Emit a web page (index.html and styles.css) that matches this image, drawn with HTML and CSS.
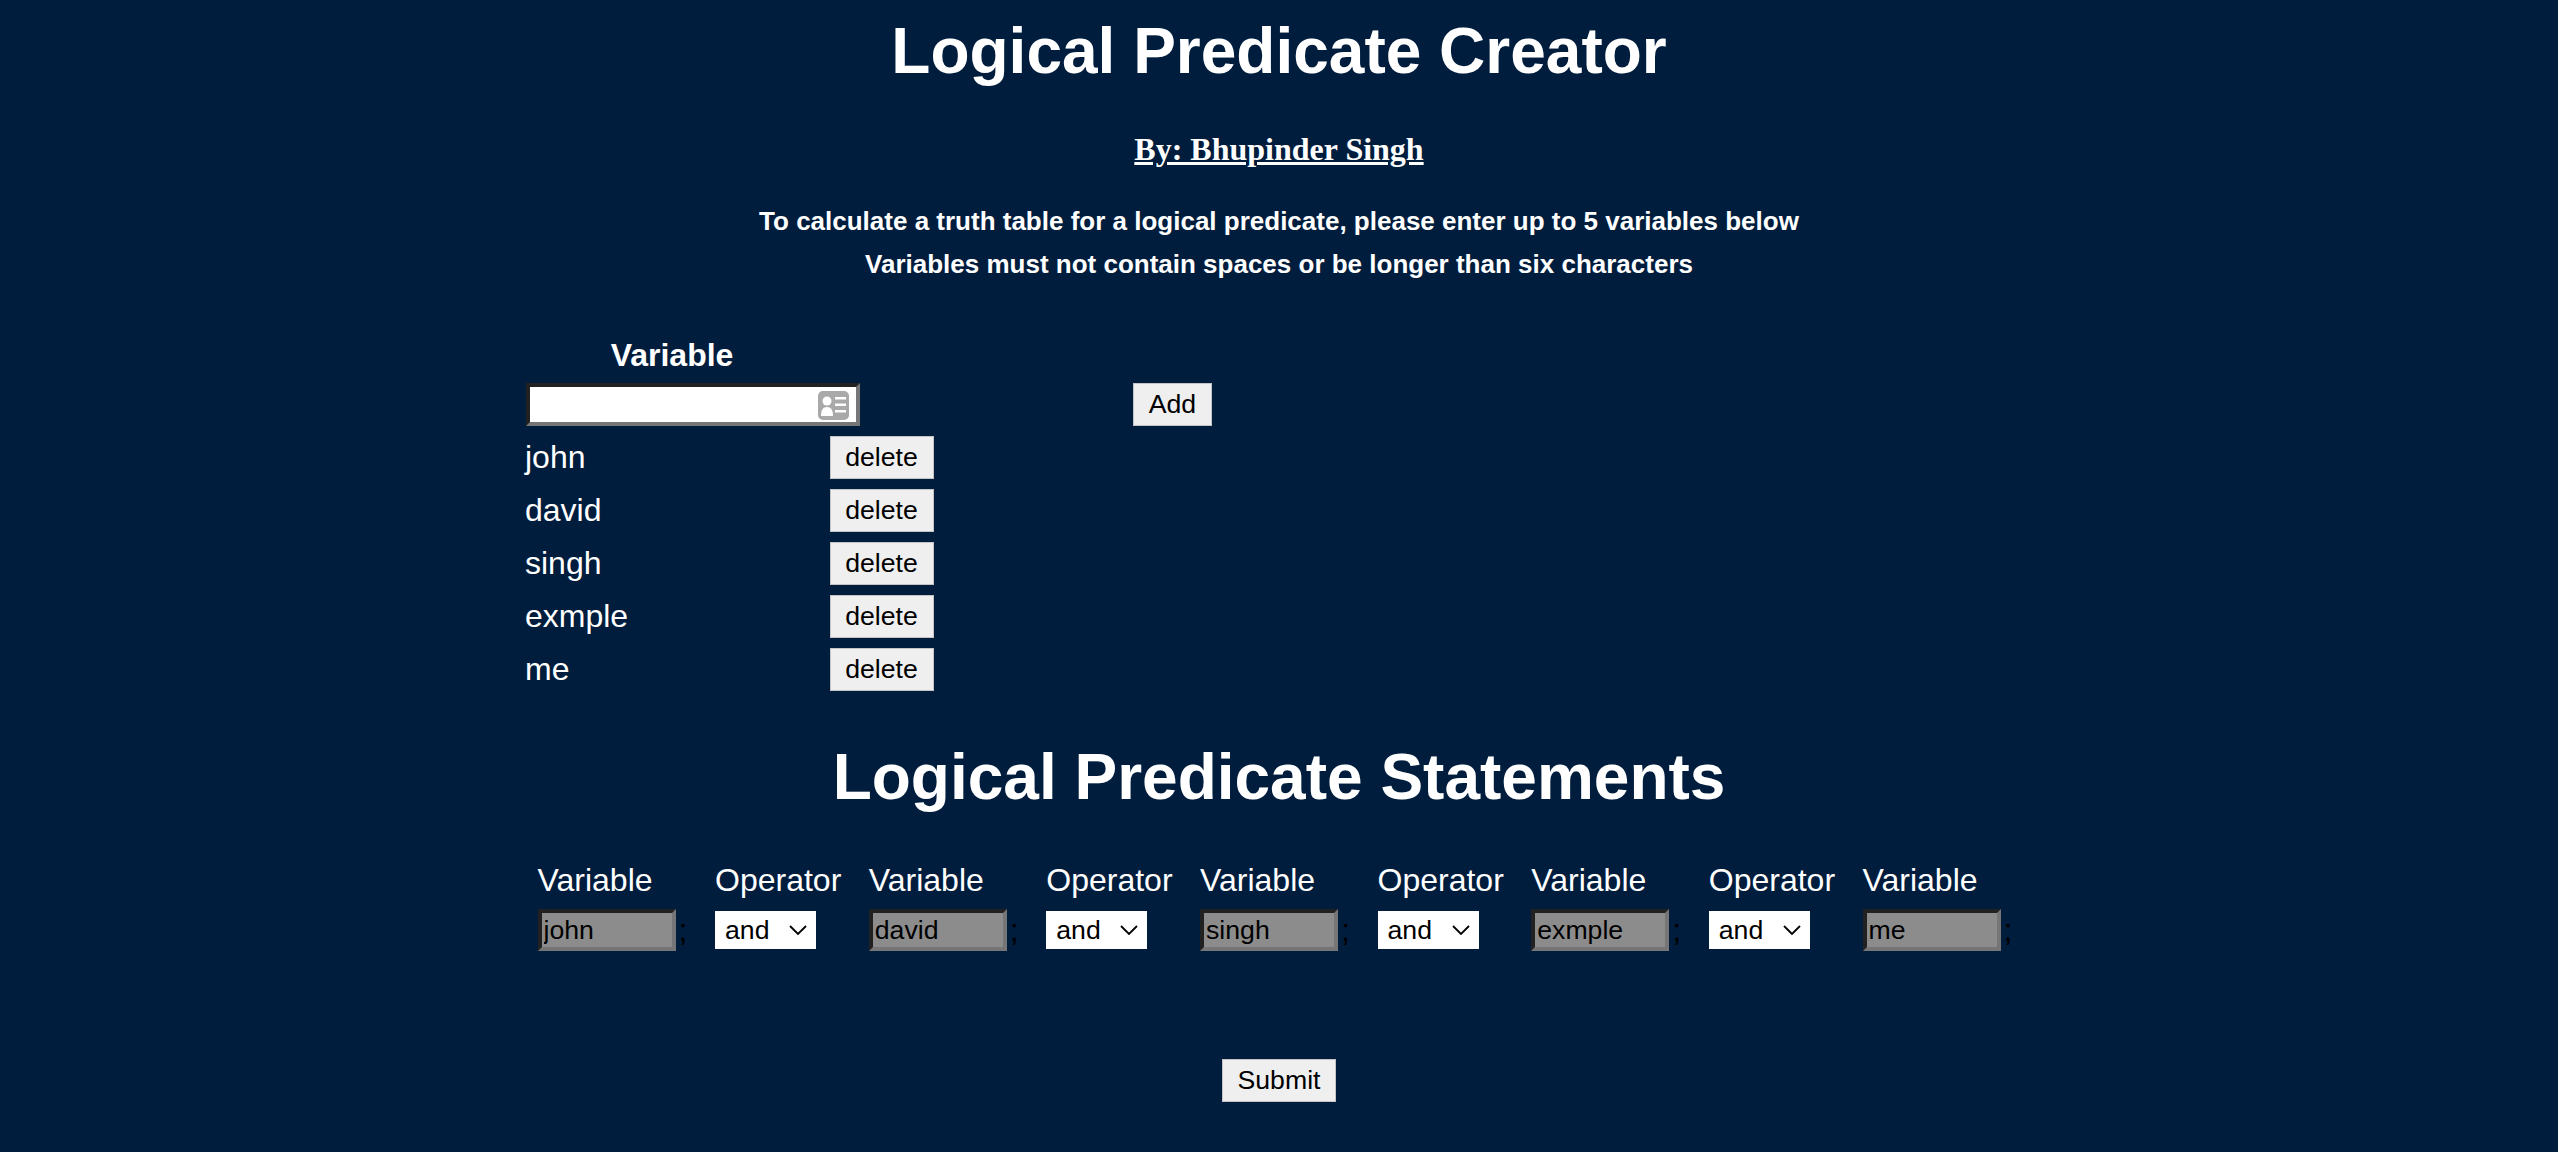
FILE: index.html
```html
<!DOCTYPE html>
<html lang="en">
<head>
    <meta charset="UTF-8">
    <meta name="viewport" content="width=device-width, initial-scale=1.0">
    <title>Logical Predicate Creator</title>
    <link rel="stylesheet" href="styles.css">
</head>
<body>
    <h1 class="page-title">Logical Predicate Creator</h1>
    <h3 class="byline">By: Bhupinder Singh</h3>
    <p class="intro">To calculate a truth table for a logical predicate, please enter up to 5 variables below</p>
    <p class="intro">Variables must not contain spaces or be longer than six characters</p>

    <form class="variables">
        <div class="variable-head">Variable</div>
        <div class="add-row">
            <div class="name-wrap">
                <input type="text" class="name-input">
                <svg class="contact-icon" viewBox="0 0 31 29" aria-hidden="true">
                    <rect width="31" height="29" rx="5" fill="#a9a9a9"/>
                    <circle cx="9" cy="10" r="4.5" fill="#fff"/>
                    <path d="M3 25c0-6 2-9 6-9s6 3 6 9z" fill="#fff"/>
                    <path d="M17 6h11v2.500h-11zM17 12.500h11v2.500h-11zM17 19h11v2.500h-11z" fill="#fff"/>
                </svg>
            </div>
            <button type="button" class="btn">Add</button>
        </div>
        <div class="variable-row"><span class="variable-name">john</span><button type="button" class="btn">delete</button></div>
        <div class="variable-row"><span class="variable-name">david</span><button type="button" class="btn">delete</button></div>
        <div class="variable-row"><span class="variable-name">singh</span><button type="button" class="btn">delete</button></div>
        <div class="variable-row"><span class="variable-name">exmple</span><button type="button" class="btn">delete</button></div>
        <div class="variable-row"><span class="variable-name">me</span><button type="button" class="btn">delete</button></div>
    </form>

    <h1 class="section-title">Logical Predicate Statements</h1>

    <form class="statements">
        <div class="statement-col var-col">
            <span class="col-label">Variable</span>
            <div class="col-field"><input type="text" class="var-box" value="john" disabled><span class="stray">;</span></div>
        </div>
        <div class="statement-col op-col">
            <span class="col-label">Operator</span>
            <div class="col-field"><select class="op-select"><option>and</option><option>or</option></select></div>
        </div>
        <div class="statement-col var-col">
            <span class="col-label">Variable</span>
            <div class="col-field"><input type="text" class="var-box" value="david" disabled><span class="stray">;</span></div>
        </div>
        <div class="statement-col op-col">
            <span class="col-label">Operator</span>
            <div class="col-field"><select class="op-select"><option>and</option><option>or</option></select></div>
        </div>
        <div class="statement-col var-col">
            <span class="col-label">Variable</span>
            <div class="col-field"><input type="text" class="var-box" value="singh" disabled><span class="stray">;</span></div>
        </div>
        <div class="statement-col op-col">
            <span class="col-label">Operator</span>
            <div class="col-field"><select class="op-select"><option>and</option><option>or</option></select></div>
        </div>
        <div class="statement-col var-col">
            <span class="col-label">Variable</span>
            <div class="col-field"><input type="text" class="var-box" value="exmple" disabled><span class="stray">;</span></div>
        </div>
        <div class="statement-col op-col">
            <span class="col-label">Operator</span>
            <div class="col-field"><select class="op-select"><option>and</option><option>or</option></select></div>
        </div>
        <div class="statement-col var-col">
            <span class="col-label">Variable</span>
            <div class="col-field"><input type="text" class="var-box" value="me" disabled><span class="stray">;</span></div>
        </div>
    </form>

    <div class="submit-row"><button type="button" class="btn">Submit</button></div>
</body>
</html>
```

FILE: styles.css
```css
body {
    margin: 0;
    background-color: #001d3d;
    color: #fff;
    font-family: "Liberation Sans", Arial, sans-serif;
    text-align: center;
    height: 1152px;
    overflow: hidden;
}
.page-title {
    font-size: 64px;
    line-height: 74px;
    margin: 14px 0 0;
}
.byline {
    font-family: "Liberation Serif", "Times New Roman", serif;
    font-size: 32px;
    line-height: 37px;
    text-decoration: underline;
    margin: 43px 0 0;
}
.intro {
    font-size: 26px;
    font-weight: bold;
    line-height: 30px;
    margin: 13px 0 0;
}
.byline + .intro {
    margin-top: 38px;
}
.variables {
    width: 1508px;
    margin: 58px auto 0;
    text-align: left;
}
.variable-head {
    width: 292px;
    font-size: 32px;
    font-weight: bold;
    line-height: 37px;
    text-align: center;
    margin-left: 1px;
}
.add-row {
    display: flex;
    align-items: flex-start;
    margin: 9px 0 10px;
}
.name-wrap {
    position: relative;
    width: 334px;
    margin-left: 1px;
    margin-right: 273px;
}
.name-input {
    display: block;
    width: 100%;
    height: 43px;
    box-sizing: border-box;
    border: 4px inset #767676;
    background: #fff;
    font-size: 26.67px;
    padding: 0 2px;
}
.contact-icon {
    position: absolute;
    right: 11px;
    top: 8px;
    width: 31px;
    height: 29px;
}
.btn {
    height: 43px;
    box-sizing: border-box;
    padding: 0 14.7px;
    font-family: "Liberation Sans", Arial, sans-serif;
    font-size: 26.67px;
    color: #000;
    background-color: #efefef;
    border: 1px solid #c4c4c4;
}
.variable-row {
    display: flex;
    align-items: center;
    height: 43px;
    margin-bottom: 10px;
}
.variable-name {
    width: 304.5px;
    font-size: 32px;
}
.section-title {
    font-size: 64px;
    line-height: 74px;
    margin: 49px 0 0;
}
.statements {
    display: flex;
    width: 1495.5px;
    margin: 48px auto 0;
    padding-left: 12.5px;
    text-align: left;
}
.statement-col {
    flex: none;
}
.var-col {
    width: 177.5px;
}
.op-col {
    width: 153.75px;
}
.col-label {
    display: block;
    font-size: 32px;
    line-height: 37px;
}
.col-field {
    display: flex;
    align-items: center;
    height: 44px;
    margin-top: 9px;
}
.var-box {
    flex: none;
    width: 138px;
    height: 42px;
    box-sizing: border-box;
    border: 4px inset #767676;
    background: #8c8c8c;
    color: #000;
    font-family: "Liberation Sans", Arial, sans-serif;
    font-size: 26.67px;
    padding: 0 2px;
    opacity: 1;
}
.stray {
    color: #000;
    font-size: 32px;
    margin-left: 3px;
}
.op-select {
    appearance: none;
    width: 101px;
    height: 38px;
    border: none;
    border-radius: 0;
    padding: 0 0 0 10px;
    font-family: "Liberation Sans", Arial, sans-serif;
    font-size: 26.67px;
    color: #000;
    background: #fff url("data:image/svg+xml,%3Csvg xmlns='http://www.w3.org/2000/svg' width='18' height='10'%3E%3Cpath d='M1 1l8 8 8-8' fill='none' stroke='%23000' stroke-width='1.800'/%3E%3C/svg%3E") no-repeat right 9px center;
}
.submit-row {
    margin-top: 107px;
}
```
